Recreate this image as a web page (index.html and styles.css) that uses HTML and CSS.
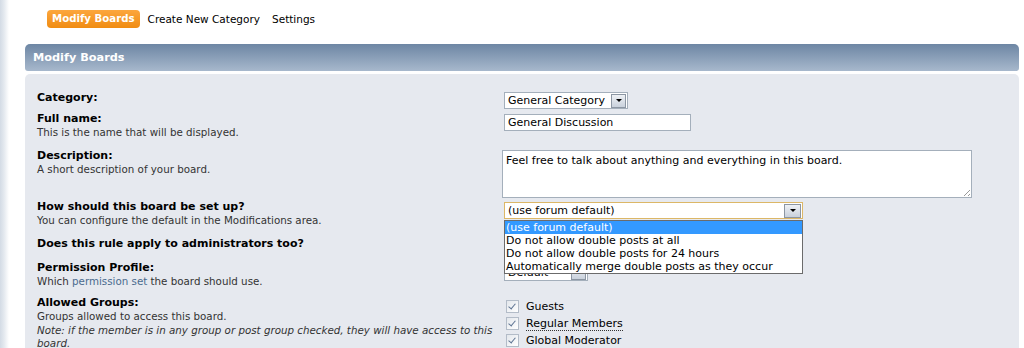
FILE: index.html
```html
<!DOCTYPE html>
<html lang="en">
<head>
    <meta charset="UTF-8">
    <title>Modify Boards</title>
    <link rel="stylesheet" href="styles.css">
</head>
<body>
    <div class="page">
        <ul class="tabs">
            <li class="active">Modify Boards</li>
            <li>Create New Category</li>
            <li>Settings</li>
        </ul>

        <h3 class="cat-bar">Modify Boards</h3>

        <div class="window">
            <dl class="settings">
                <dt><strong>Category:</strong></dt>
                <dd>
                    <div class="select sel-cat">
                        <span class="sel-text">General Category</span>
                        <span class="sel-btn"></span>
                    </div>
                </dd>

                <dt>
                    <strong>Full name:</strong>
                    <span class="smalltext">This is the name that will be displayed.</span>
                </dt>
                <dd><div class="input-text">General Discussion</div></dd>

                <dt>
                    <strong>Description:</strong>
                    <span class="smalltext">A short description of your board.</span>
                </dt>
                <dd><div class="textarea">Feel free to talk about anything and everything in this board.<span class="grip"></span></div></dd>

                <dt>
                    <strong>How should this board be set up?</strong>
                    <span class="smalltext">You can configure the default in the Modifications area.</span>
                </dt>
                <dd>
                    <div class="dropdown">
                        <div class="select sel-wide focus">
                            <span class="sel-text">(use forum default)</span>
                            <span class="sel-btn"></span>
                        </div>
                        <ul class="options">
                            <li class="hl">(use forum default)</li>
                            <li>Do not allow double posts at all</li>
                            <li>Do not allow double posts for 24 hours</li>
                            <li>Automatically merge double posts as they occur</li>
                        </ul>
                    </div>
                </dd>

                <dt><strong>Does this rule apply to administrators too?</strong></dt>
                <dd></dd>

                <dt>
                    <strong>Permission Profile:</strong>
                    <span class="smalltext">Which <a href="#">permission set</a> the board should use.</span>
                </dt>
                <dd>
                    <div class="select sel-profile">
                        <span class="sel-text">Default</span>
                        <span class="sel-btn"></span>
                    </div>
                </dd>

                <dt>
                    <strong>Allowed Groups:</strong>
                    <span class="smalltext">Groups allowed to access this board.</span>
                    <span class="smalltext"><em>Note: if the member is in any group or post group checked, they will have access to this board.</em></span>
                </dt>
                <dd class="groups">
                    <label><span class="check"></span>Guests</label>
                    <label><span class="check"></span><span class="dotted">Regular Members</span></label>
                    <label><span class="check"></span>Global Moderator</label>
                </dd>
            </dl>
        </div>
    </div>
</body>
</html>
```

FILE: styles.css
```css
body {
    margin: 0;
    background: #fff linear-gradient(90deg, #d3dbe5 0, #e4e9ef 4px, #fff 9px) repeat-y;
    font-family: "DejaVu Sans", Verdana, sans-serif;
    color: #000;
    height: 348px;
    overflow: hidden;
}

.page {
    padding: 10px 5px 0 25px;
}

/* tabs */
.tabs {
    list-style: none;
    margin: 0 0 0 22px;
    padding: 0;
    display: flex;
    align-items: center;
    height: 18px;
}

.tabs li {
    font-size: 10.5px;
    padding: 0 6px;
    line-height: 18px;
}

.tabs li.active {
    background: #f7941d linear-gradient(#fca63d, #f08c12);
    color: #fff;
    font-weight: bold;
    font-size: 10.2px;
    border-radius: 4px;
    padding: 0 5px;
    margin-right: 2px;
}

/* header bar */
.cat-bar {
    margin: 16px 0 3px;
    height: 27px;
    line-height: 27px;
    padding: 0 8px;
    color: #fff;
    font-size: 11.3px;
    font-weight: bold;
    background: linear-gradient(#6d86a4, #a7b8cc);
    border-radius: 5px 5px 3px 3px;
}

.window {
    background: #e6e9ef;
    border-radius: 5px 5px 0 0;
    padding: 17px 12px 0;
    height: 257px;
}

/* settings list */
.settings {
    margin: 0;
    display: grid;
    grid-template-columns: 467px 1fr;
    grid-template-rows: 21px 37px 51px 37px 24px 35px auto;
}

.settings dt {
    line-height: 14px;
}

.settings dt strong {
    display: block;
    font-size: 11px;
}

.smalltext {
    display: block;
    font-size: 10.3px;
    line-height: 13.5px;
    color: #333;
}

.smalltext a {
    color: #4a6b8e;
    text-decoration: none;
}

.settings dd {
    margin: 0;
    font-size: 11px;
}

/* fake form controls */
.select {
    display: flex;
    align-items: center;
    height: 15px;
    background: #fff;
    border: 1px solid #a4afbb;
    margin-top: 1px;
    font-size: 11px;
}

.sel-text {
    flex: 1;
    padding-left: 3px;
    white-space: nowrap;
}

.sel-btn {
    width: 13px;
    height: 12px;
    margin-right: 1px;
    border: 1px solid #8c96a3;
    background: linear-gradient(#eef1f5, #c9d1dc);
    display: flex;
    align-items: center;
    justify-content: center;
}

.sel-btn::after {
    content: "";
    border-left: 3px solid transparent;
    border-right: 3px solid transparent;
    border-top: 3px solid #000;
}

.sel-cat {
    width: 122px;
}

.sel-wide {
    width: 297px;
}

.sel-wide.focus {
    border-color: #dcb767;
}

.sel-wide .sel-btn {
    width: 15px;
}

.sel-profile {
    width: 82px;
    margin-top: 3px;
}

.input-text {
    width: 182px;
    height: 15px;
    line-height: 15px;
    padding-left: 3px;
    border: 1px solid #a4afbb;
    background: #fff;
    margin-top: 2px;
}

.textarea {
    position: relative;
    width: 462px;
    height: 42px;
    margin: 1px 0 0 -2px;
    padding: 2px 3px;
    border: 1px solid #a4afbb;
    background: #fff;
    line-height: 15px;
}

.grip {
    position: absolute;
    right: 1px;
    bottom: 1px;
    width: 6px;
    height: 6px;
    background: linear-gradient(135deg, transparent 45%, #999 45%, #999 55%, transparent 55%, transparent 75%, #999 75%, #999 85%, transparent 85%);
}

/* open dropdown list */
.dropdown {
    position: relative;
    margin-top: 2px;
}

.options {
    position: absolute;
    z-index: 2;
    top: 18px;
    left: 0;
    width: 297px;
    margin: 0;
    padding: 0;
    list-style: none;
    background: #fff;
    border: 1px solid #6b6b6b;
    font-size: 11px;
    line-height: 13px;
}

.options li {
    padding-left: 1px;
    white-space: nowrap;
}

.options li.hl {
    background: #3399ff;
    color: #fff;
}

/* groups */
.groups {
    padding-top: 2px;
}

.groups label {
    display: flex;
    align-items: center;
    height: 17px;
    font-size: 11px;
}

.check {
    width: 11px;
    height: 11px;
    border: 1px solid #b3bcc8;
    background: linear-gradient(135deg, #e3e7ec, #fff);
    margin: 0 7px 0 2px;
    position: relative;
}

.check::after {
    content: "";
    position: absolute;
    left: 3px;
    top: 1px;
    width: 3px;
    height: 6px;
    border: solid #5e7493;
    border-width: 0 1.5px 1.5px 0;
    transform: rotate(40deg);
}

.dotted {
    border-bottom: 1px dotted #333;
    line-height: 13px;
}
```
